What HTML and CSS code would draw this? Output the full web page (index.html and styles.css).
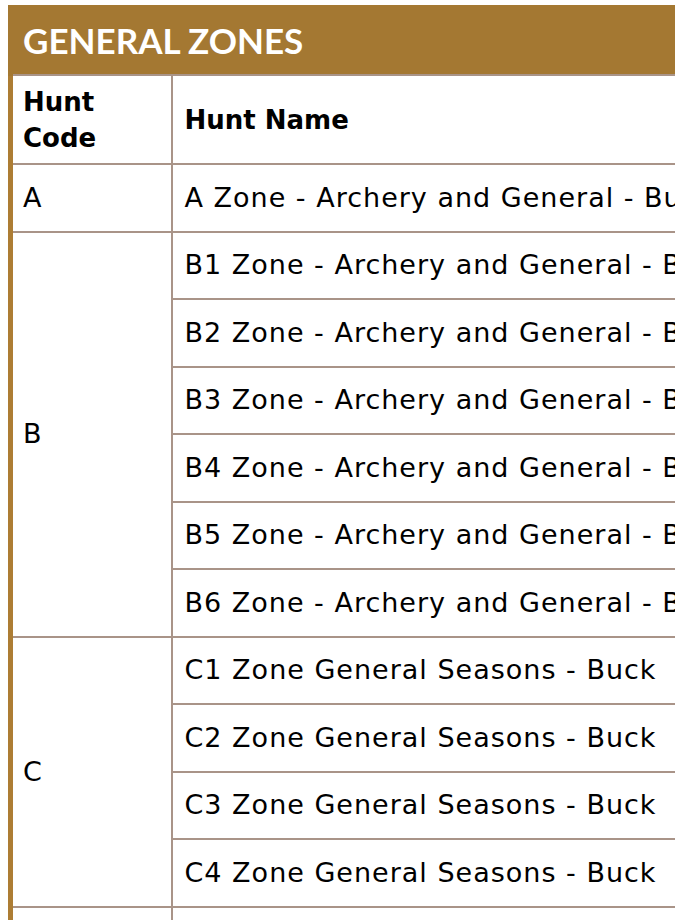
FILE: index.html
```html
<!DOCTYPE html>
<html>
<head>
<meta charset="utf-8">
<link rel="stylesheet" href="styles.css">
</head>
<body>
<div class="wrap">
<table class="zones">
  <colgroup><col class="c1"><col class="c2"></colgroup>
  <tr class="title-row"><td colspan="2" class="title">GENERAL ZONES</td></tr>
  <tr class="head-row"><th class="code">Hunt<br>Code</th><th class="name">Hunt Name</th></tr>
  <tr><td class="code">A</td><td class="name">A Zone - Archery and General - Buck</td></tr>
  <tr><td class="code" rowspan="6">B</td><td class="name">B1 Zone - Archery and General - Buck</td></tr>
  <tr><td class="name">B2 Zone - Archery and General - Buck</td></tr>
  <tr><td class="name">B3 Zone - Archery and General - Buck</td></tr>
  <tr><td class="name">B4 Zone - Archery and General - Buck</td></tr>
  <tr><td class="name">B5 Zone - Archery and General - Buck</td></tr>
  <tr><td class="name">B6 Zone - Archery and General - Buck</td></tr>
  <tr><td class="code" rowspan="4">C</td><td class="name">C1 Zone General Seasons - Buck</td></tr>
  <tr><td class="name">C2 Zone General Seasons - Buck</td></tr>
  <tr><td class="name">C3 Zone General Seasons - Buck</td></tr>
  <tr><td class="name">C4 Zone General Seasons - Buck</td></tr>
  <tr><td class="code">D</td><td class="name">D Zone General Seasons - Buck</td></tr>
</table>
</div>
</body>
</html>
```
FILE: styles.css
```css
html, body {
  margin: 0;
  padding: 0;
  background: #ffffff;
  overflow: hidden;
}
.wrap {
  padding: 5px 0 0 8px;
  width: 1200px;
}
.zones {
  border-collapse: collapse;
  table-layout: fixed;
  width: 900px;
  font-family: "DejaVu Sans", sans-serif;
  font-size: 26px;
  color: #000;
}
.c1 { width: 161px; }
.c2 { width: 739px; }
.title {
  background: #a47832;
  color: #fff;
  font-family: Lato, "DejaVu Sans", sans-serif;
  font-weight: 700;
  font-size: 35px;
  height: 70px;
  padding: 0 0 0 10px;
  box-sizing: border-box;
  border: none;
  border-left: 5px solid #a47832;
  vertical-align: middle;
}
.zones th, .zones td.code, .zones td.name {
  border: 2px solid #a99488;
  text-align: left;
  vertical-align: middle;
  white-space: nowrap;
  line-height: 36px;
}
.zones th {
  font-weight: 700;
  height: 87px;
  padding: 0 10px;
}
.zones td.code, .zones td.name {
  height: 65.5px;
  padding: 0 10px;
  font-size: 27px;
  letter-spacing: 1px;
}
.zones .code {
  border-left: 5px solid #ad7d34 !important;
}
.zones .name {
  padding-left: 12px !important;
}
```
